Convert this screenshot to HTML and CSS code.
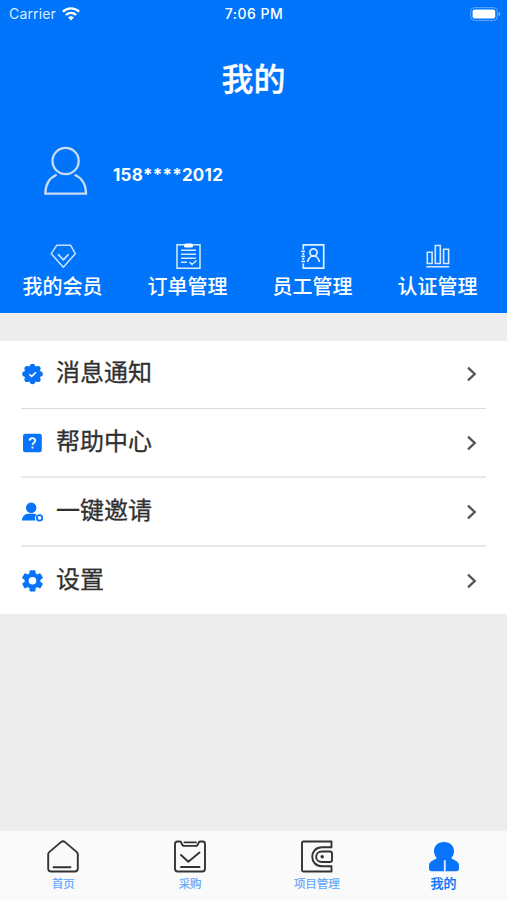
FILE: index.html
```html
<!DOCTYPE html>
<html lang="zh-CN">
<head>
<meta charset="utf-8">
<title>我的</title>
<link rel="stylesheet" href="styles.css">
</head>
<body>
<div class="app">
  <header class="header">
    <div class="status">
      <div class="carrier"><span>Carrier</span>
        <svg width="18" height="14" viewBox="0 0 18 14" fill="none" stroke="#fff" stroke-width="2.3"><path d="M.9 4.7C5.6.3 12.4.3 17.1 4.7M3.9 8C7 5.2 11 5.2 14.1 8"/><path d="M9 13.4 6.1 10.4Q9 8 11.9 10.4Z" fill="#fff" stroke="none"/></svg>
      </div>
      <div class="time">7:06 PM</div>
      <div class="battery"><svg width="31" height="14" viewBox="0 0 31 14"><rect x=".7" y=".6" width="26.6" height="12.8" rx="3.8" fill="none" stroke="#5fa8ff" stroke-width="1"/><rect x="2.6" y="2.4" width="22.6" height="9.2" rx="2" fill="#fff"/><path d="M28.6 5v4q1.7-.5 1.7-2t-1.7-2" fill="#8fc2ff"/></svg></div>
    </div>
    <h1 class="title">我的</h1>
    <div class="profile">
      <svg width="44" height="50" viewBox="0 0 44 50" fill="none" stroke="#c9dcf3" stroke-width="2.3"><circle cx="21.6" cy="15" r="13.1"/><path d="M12.6 28.7C5 32 1.4 38.7 1.3 47.6H42C41.9 38.7 38.2 32 30.6 28.7"/></svg>
      <span class="phone">158****2012</span>
    </div>
    <nav class="shortcuts">
      <a class="shortcut">
        <svg width="28" height="28" viewBox="0 0 28 28" fill="none" stroke="#c5e1ff" stroke-width="1.5" stroke-linejoin="round"><path d="M7.7 3.3H21.7L26.3 11.7 14.3 25.2 2.3 11.7Z"/><path d="M9 12.2 14.3 17.8 19.6 12.2" stroke-width="1.7"/></svg>
        <span>我的会员</span>
      </a>
      <a class="shortcut">
        <svg width="28" height="28" viewBox="0 0 28 28" fill="none" stroke="#d7eaff" stroke-width="1.5"><path d="M10 2.8H3V26.2H26V2.8H19"/><rect x="10" y="1.4" width="9" height="4" rx="1.5" fill="#fff" stroke="none"/><path d="M7 8.3H22M7 12.3H22M7 16.3H22M7 20.3H13M15.5 20 18 22.5 22.5 18.5"/></svg>
        <span>订单管理</span>
      </a>
      <a class="shortcut">
        <svg width="28" height="28" viewBox="0 0 28 28" fill="none" stroke="#e2f0ff" stroke-width="1.7"><path d="M4.3 7.5V2.8H24.7V26.2H4.3V21.5M4.3 11v2M4.3 16v2M2.3 9.4H6M2.3 14.4H6M2.3 19.5H6"/><circle cx="14.5" cy="10.5" r="3.6"/><path d="M8.5 20C9.5 16 12 14 14.5 14S19.5 16 20.5 20"/></svg>
        <span>员工管理</span>
      </a>
      <a class="shortcut">
        <svg width="28" height="28" viewBox="0 0 28 28" fill="none" stroke="#d7eaff" stroke-width="1.6"><path d="M3.3 10.3H8.1V21.5H3.3ZM11.3 3.5H16.3V21.5H11.3ZM19.6 7.3H24.6V21.5H19.6ZM2.3 24.8H25.3"/></svg>
        <span>认证管理</span>
      </a>
    </nav>
  </header>

  <main class="list">
    <a class="row">
      <svg class="lead" viewBox="0 0 22 22"><g fill="#0872f5"><circle cx="11.5" cy="11" r="8.3"/><circle cx="11.5" cy="3.4" r="2.7"/><circle cx="16.9" cy="5.6" r="2.7"/><circle cx="19.1" cy="11" r="2.7"/><circle cx="16.9" cy="16.4" r="2.7"/><circle cx="11.5" cy="18.6" r="2.7"/><circle cx="6.1" cy="16.4" r="2.7"/><circle cx="3.9" cy="11" r="2.7"/><circle cx="6.1" cy="5.6" r="2.7"/></g><path d="M8.3 11.2 10.7 13.4 15 9.2" fill="none" stroke="#fff" stroke-width="1.5"/></svg>
      <span>消息通知</span>
      <svg class="chevron" viewBox="0 0 12 16"><path d="M2 1.7 8.7 8 2 14.3"/></svg>
    </a>
    <a class="row">
      <svg class="lead" viewBox="0 0 22 22"><rect x="2" y="1.8" width="18.8" height="18.5" rx="2.3" fill="#0874fa"/><path d="M8.6 8.6C8.7 5.4 14.3 5.4 14.3 8.5 14.3 10.6 11.5 10.7 11.5 13.1M11.5 14.5V16.5" fill="none" stroke="#fff" stroke-width="1.8"/></svg>
      <span>帮助中心</span>
      <svg class="chevron" viewBox="0 0 12 16"><path d="M2 1.7 8.7 8 2 14.3"/></svg>
    </a>
    <a class="row">
      <svg class="lead" viewBox="0 0 22 22"><circle cx="10.2" cy="6.8" r="5.2" fill="#0874fa"/><path d="M.8 19.6C1.2 15.1 4.1 12.8 7.5 12.8h5.3c1.2 0 2.2.4 3 1-2 1.5-2.4 4-1.2 5.8Z" fill="#0874fa"/><circle cx="18.6" cy="16.9" r="2.7" fill="#fff" stroke="#0874fa" stroke-width="1.8"/></svg>
      <span>一键邀请</span>
      <svg class="chevron" viewBox="0 0 12 16"><path d="M2 1.7 8.7 8 2 14.3"/></svg>
    </a>
    <a class="row">
      <svg class="lead" viewBox="0 0 22 22"><g fill="#0874fa"><circle cx="11.5" cy="10.8" r="8"/><rect x="8.5" y=".2" width="6" height="21.2" rx="1.2"/><rect x="8.5" y=".2" width="6" height="21.2" rx="1.2" transform="rotate(60 11.5 10.8)"/><rect x="8.5" y=".2" width="6" height="21.2" rx="1.2" transform="rotate(120 11.5 10.8)"/></g><circle cx="11.5" cy="10.8" r="3.8" fill="#fff"/></svg>
      <span>设置</span>
      <svg class="chevron" viewBox="0 0 12 16"><path d="M2 1.7 8.7 8 2 14.3"/></svg>
    </a>
  </main>

  <nav class="tabs">
    <a class="tab">
      <svg viewBox="0 0 34 34"><path d="M2.2 14.2Q2.2 13 3.2 12.1L15.2 1.9Q17 .5 18.8 1.9L30.8 12.1Q31.8 13 31.8 14.2V28.5Q31.8 31.5 28.8 31.5H5.2Q2.2 31.5 2.2 28.5ZM7.5 27.3H24.5"/></svg>
      <span>首页</span>
    </a>
    <a class="tab">
      <svg viewBox="0 0 34 34"><path d="M4.5 1.5H6.8Q8.2 1.5 8.5 3 9.2 5.9 11.5 5.9H22.5Q24.8 5.9 25.5 3 25.8 1.5 27.2 1.5H29.5Q32 1.5 32 4V28.8Q32 31.5 29.3 31.5H4.7Q2 31.5 2 28.8V4Q2 1.5 4.5 1.5ZM11.5 2.4H23M8 15 15.3 21.7 26.5 12.5M8 27H26.5"/></svg>
      <span>采购</span>
    </a>
    <a class="tab">
      <svg viewBox="0 0 34 34"><path d="M31.5 7.3V1.5H3.3Q2 1.5 2 3V30Q2 31.5 3.3 31.5H31.5V26.2H22C9 26.2 9 7.3 22 7.3H31.5M22 11.5H30Q32 11.5 32 13.5V20Q32 22 30 22H22C14.2 22 14.2 11.5 22 11.5Z"/><circle cx="22.2" cy="16.8" r="1.7" fill="#333" stroke="none"/></svg>
      <span>项目管理</span>
    </a>
    <a class="tab tab-on">
      <svg viewBox="0 0 34 34"><path d="M17 2C23.5 2 27 6.2 27 11.2 27 14 25.6 16.4 24.2 18.3L30 21.4Q32 22.8 32 25.5V28.5Q32 31.2 29.3 31.2H4.7Q2 31.2 2 28.5V25.5Q2 22.8 4 21.4L9.8 18.3C8.4 16.4 7 14 7 11.2 7 6.2 10.5 2 17 2Z" fill="#0874fa" stroke="none"/><path d="M17.8 21V30.5" stroke="#d9eaff"/></svg>
      <span>我的</span>
    </a>
  </nav>
</div>
</body>
</html>
```
FILE: styles.css
```css
* { box-sizing: border-box; }
body {
  margin: 0;
  font-family: Inter, "Noto Sans CJK SC", sans-serif;
  color: #303030;
}
svg { display: block; flex: none; }
.app {
  width: 507px;
  height: 900px;
  display: flex;
  flex-direction: column;
  background: #ededed;
  overflow: hidden;
}
.header {
  height: 313px;
  background: #0075fb;
  color: #fff;
  display: flex;
  flex-direction: column;
}
.status {
  height: 27px;
  display: grid;
  grid-template-columns: 1fr auto 1fr;
  align-items: center;
  padding: 0 6px 0 9px;
  line-height: 18px;
}
.carrier {
  display: flex;
  align-items: center;
  gap: 6px;
  font-size: 14px;
  letter-spacing: .15px;
  color: #dcebff;
}
.time { font-size: 14px; font-weight: 500; letter-spacing: .5px; margin-right: 2px; }
.battery { justify-self: end; }
.title {
  margin: 29px 0 0;
  font-size: 32px;
  line-height: 48px;
  font-weight: 500;
  -webkit-text-stroke: .3px currentColor;
  text-align: center;
}
.profile {
  display: flex;
  align-items: center;
  gap: 25px;
  margin-top: 42px;
  padding-left: 44px;
  height: 50px;
}
.phone {
  font-size: 17px;
  font-weight: 700;
  line-height: 20px;
  letter-spacing: .25px;
  padding-top: 8px;
}
.shortcuts {
  display: grid;
  grid-template-columns: repeat(4, 125px);
  margin-top: 46px;
}
.shortcut {
  display: flex;
  flex-direction: column;
  align-items: center;
  font-size: 20px;
  font-weight: 500;
  line-height: 30px;
}
.shortcut span { margin-top: 2px; }
.list {
  margin-top: 28px;
  height: 273px;
  padding: 0 21px;
  background: #fff;
}
.row {
  display: flex;
  align-items: center;
  height: 69px;
  padding: 0 8px 2px 0;
  border-bottom: 2px solid #e8e8e8;
  font-size: 24px;
  line-height: 36px;
  -webkit-text-stroke: .3px currentColor;
}
.row:first-child { height: 68px; border-bottom-width: 1px; border-color: #dcdcdc; padding-bottom: 4px; }
.row:last-child { height: 67px; border: 0; }
.row span { flex: 1; margin: 0 0 0 13px; }
.lead { width: 22px; height: 22px; margin-top: 2px; }
.chevron {
  width: 12px;
  height: 16px;
  margin-top: 2px;
  fill: none;
  stroke: #555;
  stroke-width: 2.3;
}
.tabs {
  display: grid;
  grid-template-columns: repeat(4, 1fr);
  height: 69px;
  margin-top: auto;
  padding-top: 9px;
  background: #fafafa;
}
.tab {
  display: flex;
  flex-direction: column;
  align-items: center;
  font-size: 11.5px;
  line-height: 18px;
  color: #62a7fb;
  -webkit-text-stroke: .2px currentColor;
}
.tab svg {
  width: 34px;
  height: 34px;
  fill: none;
  stroke: #333;
  stroke-width: 1.9;
  stroke-linecap: round;
  stroke-linejoin: round;
}
.tab span { margin-top: 1px; }
.tab-on { font-size: 13px; font-weight: 500; color: #0874fa; }
.tab-on span { margin-top: 0; }
```
